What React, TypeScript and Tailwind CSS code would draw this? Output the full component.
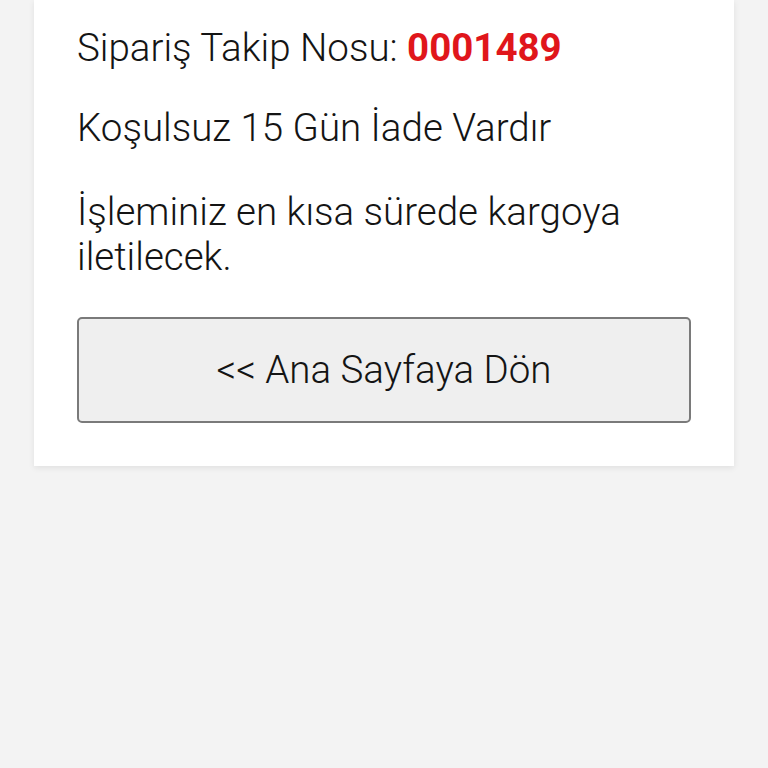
export default function App() {
  return (
    <div className="min-h-[768px] bg-[#f3f3f3] px-[34px] font-['Roboto',sans-serif] text-[#141414]">
      <div className="bg-white px-[43px] pb-[43px] pt-[25px] shadow-[0_2px_6px_rgba(0,0,0,0.08)]">
        <p className="text-[38.5px] font-light leading-[45px]">
          Sipariş Takip Nosu: <span className="font-bold text-[#e0161b]">0001489</span>
        </p>
        <p className="mt-[35px] text-[38.5px] font-light leading-[45px]">Koşulsuz 15 Gün İade Vardır</p>
        <p className="mt-[39px] text-[38.5px] font-light leading-[45px]">İşleminiz en kısa sürede kargoya iletilecek.</p>
        <button className="mt-[38px] h-[106px] w-full rounded-[5px] border-2 border-[#7a7a7a] bg-[#efefef] text-[38.5px] font-light text-[#141414]">
          &lt;&lt; Ana Sayfaya Dön
        </button>
      </div>
    </div>
  );
}
